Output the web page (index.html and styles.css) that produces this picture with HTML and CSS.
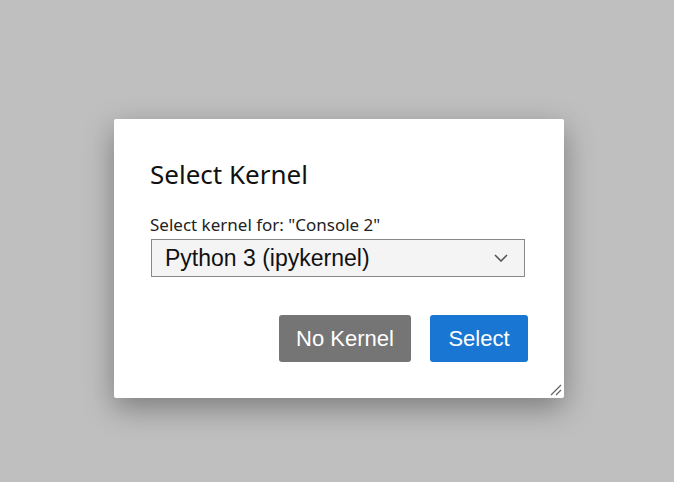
FILE: index.html
```html
<!DOCTYPE html>
<html>
<head>
<meta charset="utf-8">
<link rel="stylesheet" href="styles.css">
</head>
<body>
<div class="overlay">
  <div class="dialog">
    <h1 class="title">Select Kernel</h1>
    <label class="label">Select kernel for: "Console 2"</label>
    <div class="select">
      <span class="select-text">Python 3 (ipykernel)</span>
      <svg class="chev" width="14" height="8" viewBox="0 0 14 8"><path d="M1 1 L7 7 L13 1" fill="none" stroke="#555" stroke-width="1.6"/></svg>
    </div>
    <div class="actions">
      <button class="btn btn-grey">No Kernel</button>
      <button class="btn btn-blue">Select</button>
    </div>
    <svg class="grip" width="12" height="12" viewBox="0 0 12 12"><path d="M1 11 L11 1 M6 11 L11 6" stroke="#666" stroke-width="1.3"/></svg>
  </div>
</div>
</body>
</html>
```

FILE: styles.css
```css
html, body {
  margin: 0;
  padding: 0;
  height: 100%;
}
body {
  background: #bfbfbf;
}
.overlay {
  height: 100%;
  box-sizing: border-box;
  padding: 119px 0 0 114px;
}
.dialog {
  position: relative;
  width: 450px;
  height: 279px;
  box-sizing: border-box;
  background: #fff;
  border-radius: 2px;
  box-shadow: 0 10px 30px rgba(0,0,0,0.35);
  padding: 39px 36px 0 36px;
  display: flex;
  flex-direction: column;
  font-family: "Noto Sans", sans-serif;
}
.title {
  margin: 0;
  font-weight: 400;
  font-size: 26px;
  line-height: 32px;
  color: #111;
}
.label {
  margin-top: 24px;
  font-size: 17px;
  line-height: 22px;
  color: #222;
}
.select {
  margin: 3px 3px 0 1px;
  height: 38px;
  box-sizing: border-box;
  border: 1px solid #888;
  background: #f4f4f4;
  display: flex;
  align-items: center;
  justify-content: space-between;
  padding: 0 16px 0 13px;
}
.select-text {
  font-family: "Liberation Sans", Arial, sans-serif;
  font-size: 23px;
  color: #111;
}
.chev {
  display: block;
}
.actions {
  margin-top: 38px;
  display: flex;
  justify-content: flex-end;
  gap: 19px;
}
.btn {
  height: 47px;
  border: none;
  border-radius: 3px;
  color: #fff;
  font-family: "Liberation Sans", Arial, sans-serif;
  font-size: 22px;
  padding: 0;
}
.btn-grey {
  background: #757575;
  width: 132px;
}
.btn-blue {
  background: #1976d2;
  width: 98px;
}
.grip {
  position: absolute;
  right: 2px;
  bottom: 2px;
}
```
